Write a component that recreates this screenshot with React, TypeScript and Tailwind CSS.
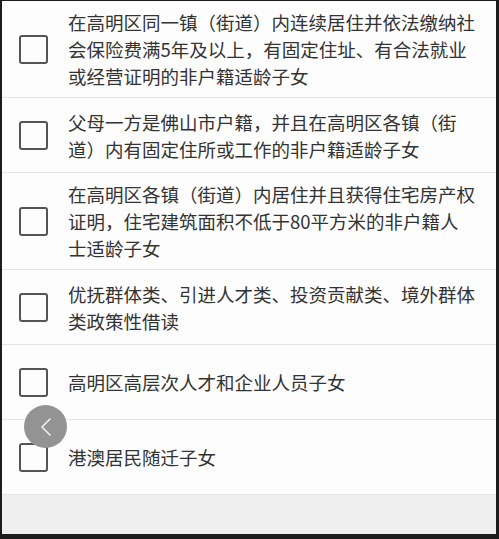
const items: string[][] = [
  [
    "在高明区同一镇（街道）内连续居住并依法缴纳社",
    "会保险费满5年及以上，有固定住址、有合法就业",
    "或经营证明的非户籍适龄子女",
  ],
  ["父母一方是佛山市户籍，并且在高明区各镇（街", "道）内有固定住所或工作的非户籍适龄子女"],
  [
    "在高明区各镇（街道）内居住并且获得住宅房产权",
    "证明，住宅建筑面积不低于80平方米的非户籍人",
    "士适龄子女",
  ],
  ["优抚群体类、引进人才类、投资贡献类、境外群体", "类政策性借读"],
  ["高明区高层次人才和企业人员子女"],
  ["港澳居民随迁子女"],
];

export default function App() {
  return (
    <div
      className="relative h-[539px] w-[499px] overflow-hidden border-t border-l-2 border-r-[3px] border-b-[5px] border-[#1c1c1c] bg-[#efefef] flex flex-col"
      style={{ fontFamily: '"Noto Sans CJK SC", "Noto Sans", sans-serif' }}
    >
      <div className="bg-[#fdfdfd]">
        {items.map((lines, i) => (
          <label
            key={i}
            className="flex min-h-[75px] items-center border-b border-[#e6e6e6] pt-[8px] pb-[7px] pl-[17px]"
          >
            <span className="h-[29px] w-[29px] shrink-0 rounded-[3px] border-2 border-[#555]" />
            <div className="ml-[20px] text-[18.5px] leading-[27px] text-[#333]">
              {lines.map((l) => (
                <div key={l} className="whitespace-nowrap">
                  {l}
                </div>
              ))}
            </div>
          </label>
        ))}
      </div>
      <div className="flex-1" />

      <button className="absolute left-[22px] top-[404px] grid h-[43px] w-[43px] place-items-center rounded-full bg-[#939393]">
        <svg width="12" height="20" viewBox="0 0 12 20" fill="none">
          <polyline points="10,2 2,10 10,18" stroke="#f2f2f2" strokeWidth="1.6" strokeLinecap="round" strokeLinejoin="round" />
        </svg>
      </button>
    </div>
  );
}
